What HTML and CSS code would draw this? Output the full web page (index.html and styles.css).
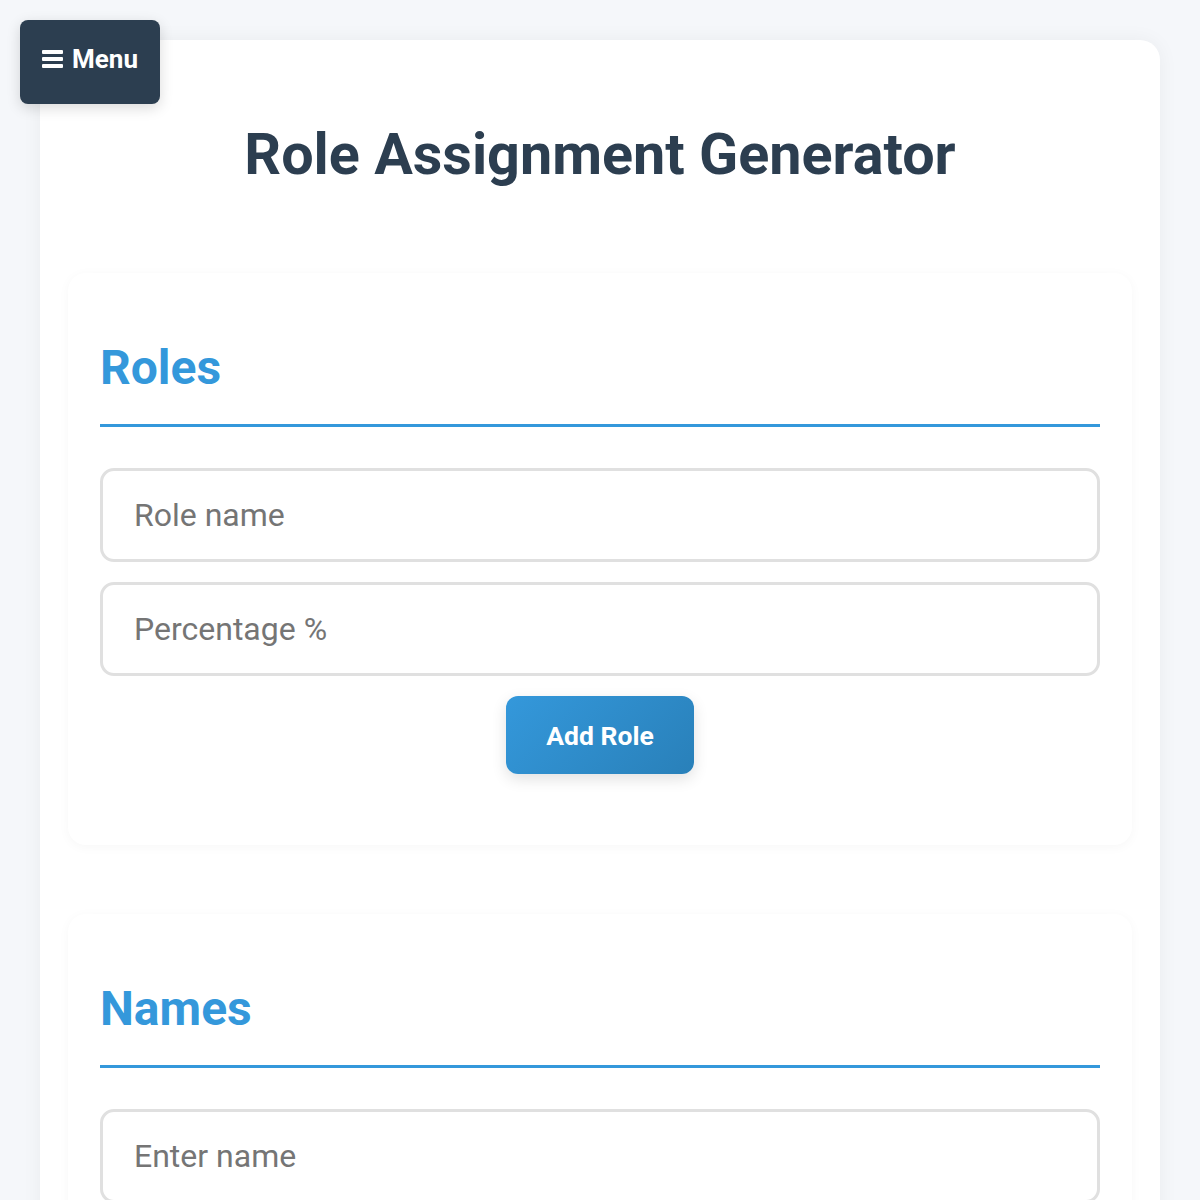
FILE: index.html
```html
<!DOCTYPE html>
<html lang="en">
<head>
<meta charset="utf-8">
<title>Role Assignment Generator</title>
<link rel="stylesheet" href="styles.css">
</head>
<body>
  <button class="menu-toggle" type="button">
    <svg class="menu-icon" width="21" height="18" viewBox="0 0 21 18" aria-hidden="true">
      <rect x="0" y="0" width="21" height="4" rx="1"/>
      <rect x="0" y="7" width="21" height="4" rx="1"/>
      <rect x="0" y="14" width="21" height="4" rx="1"/>
    </svg>
    <span>Menu</span>
  </button>

  <main class="container">
    <h1 class="page-title">Role Assignment Generator</h1>

    <section class="panel">
      <h2 class="panel-title">Roles</h2>
      <div class="form-stack">
        <input class="field" type="text" placeholder="Role name">
        <input class="field" type="number" placeholder="Percentage %">
        <button class="btn-primary" type="button">Add Role</button>
      </div>
    </section>

    <section class="panel">
      <h2 class="panel-title">Names</h2>
      <div class="form-stack">
        <input class="field" type="text" placeholder="Enter name">
      </div>
    </section>
  </main>
</body>
</html>
```
FILE: styles.css
```css
* {
  box-sizing: border-box;
}

html, body {
  margin: 0;
  background: #f5f7fa;
  font-family: Roboto, "Liberation Sans", Arial, sans-serif;
  color: #2c3e50;
}

body {
  padding: 40px;
  min-height: 1200px;
}

/* floating menu trigger */
.menu-toggle {
  position: absolute;
  top: 20px;
  left: 20px;
  z-index: 10;
  width: 140px;
  height: 84px;
  padding: 24px 0 0 22px;
  display: flex;
  align-items: flex-start;
  gap: 9px;
  border: none;
  border-radius: 8px;
  background: #2c3e50;
  color: #fff;
  font-family: inherit;
  font-size: 26px;
  font-weight: 700;
  line-height: normal;
  box-shadow: 0 4px 14px rgba(0, 0, 0, 0.15);
  cursor: pointer;
}

.menu-icon {
  fill: #fff;
  margin-top: 6px;
  flex-shrink: 0;
}

/* main sheet */
.container {
  background: #fff;
  border-radius: 20px;
  padding: 1px 28px 0;
  min-height: 1160px;
  box-shadow: 0 0 20px rgba(0, 0, 0, 0.05);
}

.page-title {
  margin: 80px 0 85px;
  text-align: center;
  font-size: 57.5px;
  font-weight: 700;
  line-height: normal;
  color: #2c3e50;
}

.panel {
  background: #fff;
  border-radius: 18px;
  padding: 66px 32px 71px;
  margin-bottom: 69px;
  box-shadow: 0 2px 12px rgba(0, 0, 0, 0.035);
}

.panel-title {
  margin: 0 0 41px;
  padding-bottom: 28px;
  border-bottom: 3px solid #3498db;
  font-size: 48px;
  font-weight: 700;
  line-height: normal;
  color: #3498db;
}

.form-stack {
  display: flex;
  flex-direction: column;
  align-items: center;
  gap: 20px;
}

.field {
  width: 100%;
  height: 94px;
  padding: 0 31px;
  border: 3px solid #e0e0e0;
  border-radius: 14px;
  background: #fff;
  font-family: inherit;
  font-size: 32px;
  color: #2c3e50;
  outline: none;
  -moz-appearance: textfield;
}

.field::-webkit-outer-spin-button,
.field::-webkit-inner-spin-button {
  -webkit-appearance: none;
  margin: 0;
}

.field::placeholder {
  color: #757575;
}

.btn-primary {
  width: 188px;
  height: 78px;
  border: none;
  border-radius: 12px;
  background: linear-gradient(135deg, #3498db, #2980b9);
  color: #fff;
  font-family: inherit;
  font-size: 26.5px;
  font-weight: 700;
  box-shadow: 0 5px 15px rgba(0, 0, 0, 0.12);
  cursor: pointer;
}
```
